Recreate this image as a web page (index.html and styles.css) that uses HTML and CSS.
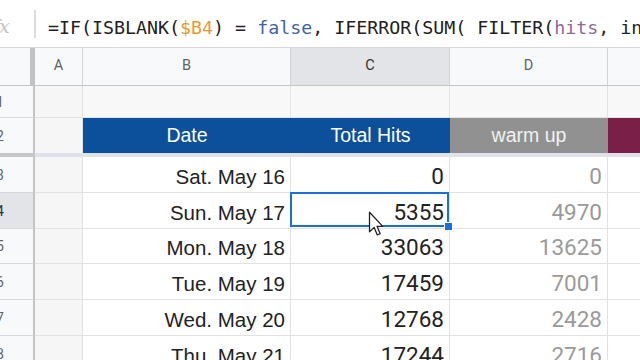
FILE: index.html
```html
<!DOCTYPE html>
<html lang="en">
<head>
    <meta charset="UTF-8">
    <meta name="viewport" content="width=device-width, initial-scale=1.0">
    <title>Hits - Sheet</title>
    <link rel="stylesheet" href="styles.css">
</head>
<body>

    <!-- Formula bar -->
    <div class="formula-bar">
        <span class="fx">fx</span>
        <span class="formula-sep"></span>
        <span class="formula">=IF(ISBLANK(<span class="ref">$B4</span>) = <span class="bool">false</span>, IFERROR(SUM( FILTER(<span class="range">hits</span>, in</span>
    </div>

    <!-- Sheet grid -->
    <div class="sheet">
        <!-- column headers -->
        <div class="cell corner"></div>
        <div class="cell col-head">A</div>
        <div class="cell col-head">B</div>
        <div class="cell col-head selected">C</div>
        <div class="cell col-head">D</div>
        <div class="cell col-head"></div>

        <!-- row 1 -->
        <div class="cell row-head">1</div>
        <div class="cell col-a"></div>
        <div class="cell blank"></div>
        <div class="cell blank"></div>
        <div class="cell blank"></div>
        <div class="cell blank"></div>

        <!-- row 2: table header -->
        <div class="cell row-head frozen">2</div>
        <div class="cell col-a frozen"></div>
        <div class="cell th th-blue">Date</div>
        <div class="cell th th-blue">Total Hits</div>
        <div class="cell th th-grey">warm up</div>
        <div class="cell th th-wine"></div>

        <div class="cell row-head">3</div>
        <div class="cell col-a"></div>
        <div class="cell date">Sat. May 16</div>
        <div class="cell num">0</div>
        <div class="cell num muted">0</div>
        <div class="cell"></div>

        <div class="cell row-head selected">4</div>
        <div class="cell col-a"></div>
        <div class="cell date">Sun. May 17</div>
        <div class="cell num active">5355</div>
        <div class="cell num muted">4970</div>
        <div class="cell"></div>

        <div class="cell row-head">5</div>
        <div class="cell col-a"></div>
        <div class="cell date">Mon. May 18</div>
        <div class="cell num">33063</div>
        <div class="cell num muted">13625</div>
        <div class="cell"></div>

        <div class="cell row-head">6</div>
        <div class="cell col-a"></div>
        <div class="cell date">Tue. May 19</div>
        <div class="cell num">17459</div>
        <div class="cell num muted">7001</div>
        <div class="cell"></div>

        <div class="cell row-head">7</div>
        <div class="cell col-a"></div>
        <div class="cell date">Wed. May 20</div>
        <div class="cell num">12768</div>
        <div class="cell num muted">2428</div>
        <div class="cell"></div>

        <div class="cell row-head">8</div>
        <div class="cell col-a"></div>
        <div class="cell date">Thu. May 21</div>
        <div class="cell num">17244</div>
        <div class="cell num muted">2716</div>
        <div class="cell"></div>
    </div>

    <!-- mouse pointer -->
    <svg class="pointer" width="16" height="26" viewBox="0 0 12 20">
        <path d="M1 1 L1 16 L4.6 12.6 L7 18.4 L9.2 17.5 L6.8 11.8 L11.2 11.8 Z" fill="#fff" stroke="#222" stroke-width="1" stroke-linejoin="round"/>
    </svg>

</body>
</html>
```

FILE: styles.css
```css
body {
    margin: 0;
    width: 640px;
    height: 360px;
    overflow: hidden;
    position: relative;
    background-color: #fff;
    font-family: "Liberation Sans", Arial, sans-serif;
}

/* formula bar */
.formula-bar {
    display: flex;
    align-items: center;
    height: 47px;
    border-bottom: 1px solid #d6d6d6;
    background-color: #fff;
}
.fx {
    flex-shrink: 0;
    margin-left: -8px;
    width: 42px;
    padding-top: 4px;
    font-family: "DejaVu Serif", serif;
    font-style: italic;
    font-size: 19px;
    color: #c4c4c4;
}
.formula-sep {
    flex-shrink: 0;
    width: 2px;
    height: 28px;
    background-color: #dcdcdc;
}
.formula {
    margin-left: 12px;
    padding-top: 10px;
    font-family: "DejaVu Sans Mono", monospace;
    font-size: 18.3px;
    line-height: 1;
    color: #222;
    white-space: nowrap;
}
.ref {
    color: #e99a2c;
}
.bool {
    color: #3f63a8;
}
.range {
    color: #8a6a9b;
}

/* grid */
.sheet {
    display: grid;
    grid-template-columns: 65px 48px 208px 159px 158px 60px;
    grid-template-rows: 38px 32px 39px 36px 36px 35px 36px 36px 36px;
    margin-left: -30px;
}
.cell {
    box-sizing: border-box;
    display: flex;
    align-items: center;
    border-right: 1px solid #e2e2e2;
    border-bottom: 1px solid #e2e2e2;
    line-height: 1;
    white-space: nowrap;
    overflow: hidden;
}
.corner {
    background-color: #f8f9fa;
    border-right: 5px solid #c2c2c2;
    border-bottom: 1px solid #c4c4c4;
}
.col-head {
    justify-content: center;
    background-color: #f8f9fa;
    border-right-color: #d4d4d4;
    border-bottom-color: #c4c4c4;
    font-family: Roboto, sans-serif;
    font-size: 14.5px;
    color: #5f6368;
}
.row-head {
    justify-content: center;
    padding-right: 3px;
    background-color: #f8f9fa;
    border-right: 2px solid #c4c4c4;
    border-bottom-color: #d8d8d8;
    font-family: Roboto, sans-serif;
    font-size: 14px;
    color: #5f6368;
}
.selected {
    background-color: #e2e4e7;
    color: #333;
}
.col-a {
    background-color: #f6f6f6;
}
.blank {
    background-color: #f8f8f8;
}
.frozen {
    border-bottom: 4px solid #dfe2e8;
}
.row-head.frozen {
    border-bottom-color: #c6c6c6;
}

/* table header row */
.th {
    justify-content: center;
    border-right: none;
    border-bottom: 4px solid #dfe2e8;
    font-size: 19.5px;
    color: #fff;
}
.th-blue {
    background-color: #0c509c;
}
.th-grey {
    background-color: #919191;
    color: #f2f2f2;
}
.th-wine {
    background-color: #7a1f47;
}

/* data */
.date,
.num {
    justify-content: flex-end;
    align-items: flex-end;
    padding: 0 5px 5px 0;
}
.date {
    font-size: 20.5px;
    color: #222;
}
.num {
    font-family: Roboto, sans-serif;
    font-size: 22.5px;
    color: #222;
}
.muted {
    color: #9a9a9a;
}
.active {
    position: relative;
    overflow: visible;
}
.active::after {
    content: "";
    position: absolute;
    top: -1px;
    left: -1px;
    right: 0;
    bottom: 1px;
    border: 2px solid #1a6fd8;
}
.active::before {
    content: "";
    position: absolute;
    right: -4px;
    bottom: -3px;
    width: 7px;
    height: 7px;
    background-color: #1a6fd8;
    border: 1px solid #fff;
    z-index: 1;
}

.pointer {
    position: absolute;
    left: 368px;
    top: 211px;
}
```
